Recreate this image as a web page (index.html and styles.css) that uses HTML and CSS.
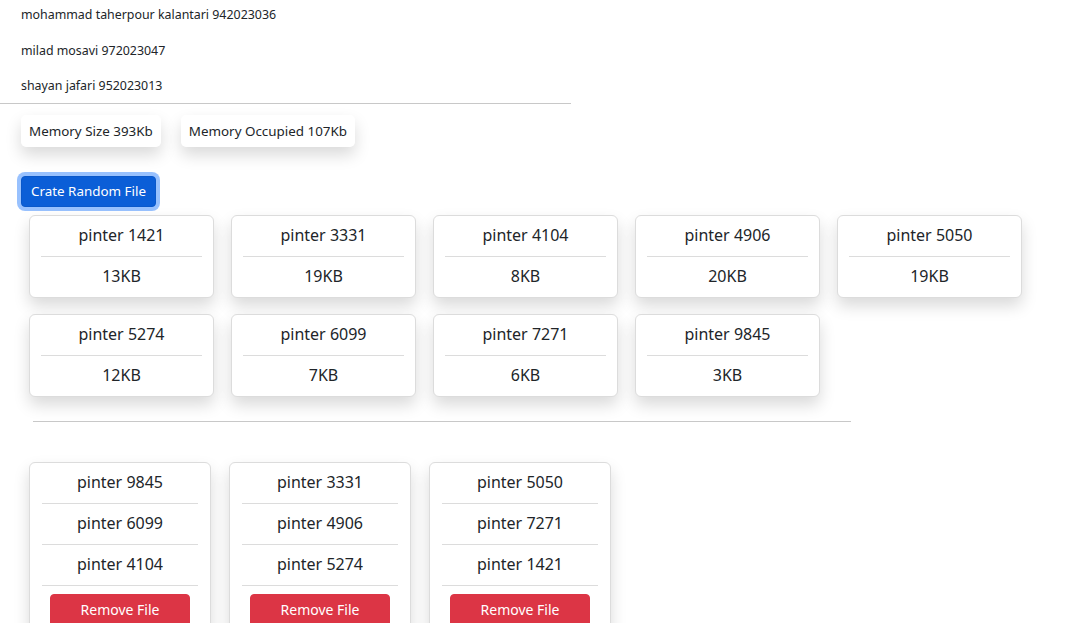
FILE: index.html
```html
<!DOCTYPE html>
<html lang="en">
<head>
<meta charset="utf-8">
<title>Memory</title>
<link rel="stylesheet" href="styles.css">
</head>
<body>
<div class="students">
  <p>mohammad taherpour kalantari 942023036</p>
  <p>milad mosavi 972023047</p>
  <p>shayan jafari 952023013</p>
</div>
<hr class="rule-top">
<div class="memory">
  <div class="mem-box">Memory Size 393Kb</div>
  <div class="mem-box">Memory Occupied 107Kb</div>
</div>
<div class="actions">
  <button class="btn btn-create">Crate Random File</button>
</div>
<div class="files">
  <div class="card"><div class="item">pinter 1421</div><div class="item">13KB</div></div>
  <div class="card"><div class="item">pinter 3331</div><div class="item">19KB</div></div>
  <div class="card"><div class="item">pinter 4104</div><div class="item">8KB</div></div>
  <div class="card"><div class="item">pinter 4906</div><div class="item">20KB</div></div>
  <div class="card"><div class="item">pinter 5050</div><div class="item">19KB</div></div>
  <div class="card"><div class="item">pinter 5274</div><div class="item">12KB</div></div>
  <div class="card"><div class="item">pinter 6099</div><div class="item">7KB</div></div>
  <div class="card"><div class="item">pinter 7271</div><div class="item">6KB</div></div>
  <div class="card"><div class="item">pinter 9845</div><div class="item">3KB</div></div>
</div>
<hr class="rule-mid">
<div class="blocks">
  <div class="card block">
    <div class="item lined">pinter 9845</div>
    <div class="item lined">pinter 6099</div>
    <div class="item lined">pinter 4104</div>
    <button class="btn btn-remove">Remove File</button>
  </div>
  <div class="card block">
    <div class="item lined">pinter 3331</div>
    <div class="item lined">pinter 4906</div>
    <div class="item lined">pinter 5274</div>
    <button class="btn btn-remove">Remove File</button>
  </div>
  <div class="card block">
    <div class="item lined">pinter 5050</div>
    <div class="item lined">pinter 7271</div>
    <div class="item lined">pinter 1421</div>
    <button class="btn btn-remove">Remove File</button>
  </div>
</div>
</body>
</html>
```

FILE: styles.css
```css
* { box-sizing: border-box; }

body {
  margin: 0;
  font-family: "Noto Sans", "Open Sans", sans-serif;
  color: #212529;
  background: #fff;
}

.students {
  padding: 5px 21px 0;
}

.students p {
  margin: 0 0 16px;
  font-size: 12.4px;
  line-height: 19.5px;
}

.students p:last-child {
  margin-bottom: 0;
}

.rule-top {
  width: 571px;
  margin: 7px 0 0;
  border: 0;
  border-top: 1px solid #c8c8c8;
}

.memory {
  display: flex;
  gap: 20px;
  padding: 11px 21px 0;
}

.mem-box {
  background: #fff;
  font-size: 13.4px;
  line-height: 21px;
  padding: 6px 8px 5px;
  border-radius: 5px;
  box-shadow: 0 8px 16px rgba(0, 0, 0, 0.15);
}

.actions {
  padding: 29px 21px 0;
}

.btn {
  font-family: inherit;
  font-size: 13.4px;
  line-height: 21px;
  border-radius: 4px;
  cursor: pointer;
  color: #fff;
}

.btn-create {
  display: block;
  height: 31px;
  padding: 4px 9px;
  background: #0b5ed7;
  border: 1px solid #0a58ca;
  box-shadow: 0 0 0 4px rgba(49, 132, 253, 0.5);
}

.files {
  display: grid;
  grid-template-columns: repeat(5, 185px);
  column-gap: 17px;
  row-gap: 16px;
  padding: 8px 0 0 29px;
}

.card {
  background: #fff;
  border: 1px solid #dcdcdc;
  border-radius: 6px;
  padding: 0 11px;
  box-shadow: 0 8px 16px rgba(0, 0, 0, 0.15);
}

.item {
  text-align: center;
  font-size: 16px;
  line-height: 24px;
  padding: 7px 0 9px;
}

.item:first-child {
  border-bottom: 1px solid #dcdcdc;
}

.rule-mid {
  width: 818px;
  margin: 24px 0 0 33px;
  border: 0;
  border-top: 1px solid #c8c8c8;
}

.blocks {
  display: grid;
  grid-template-columns: repeat(3, 182px);
  column-gap: 18px;
  padding: 40px 0 0 29px;
}

.block {
  padding: 0 12px;
}

.block .item.lined {
  border-bottom: 1px solid #dcdcdc;
}

.btn-remove {
  display: block;
  width: calc(100% - 16px);
  margin: 8px 8px 12px;
  padding: 4px 12px 6px;
  font-size: 14px;
  background: #dc3545;
  border: 1px solid #dc3545;
}
```
